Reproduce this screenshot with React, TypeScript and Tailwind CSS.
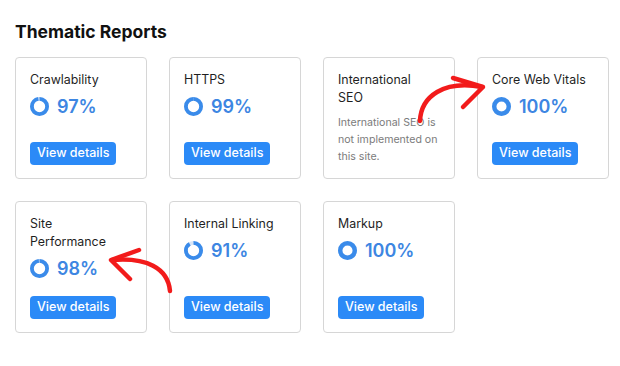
import React from 'react';

type Report = {
  title: string;
  percent?: number;
  note?: string;
};

const reports: Report[] = [
  { title: 'Crawlability', percent: 97 },
  { title: 'HTTPS', percent: 99 },
  { title: 'International SEO', note: 'International SEO is not implemented on this site.' },
  { title: 'Core Web Vitals', percent: 100 },
  { title: 'Site Performance', percent: 98 },
  { title: 'Internal Linking', percent: 91 },
  { title: 'Markup', percent: 100 },
];

const Donut: React.FC<{ value: number }> = ({ value }) => {
  const full = value >= 100;
  const stroke = full ? 4.4 : 3.8;
  const r = 9.5 - stroke / 2;
  const c = 2 * Math.PI * r;
  const filled = (c * value) / 100;
  return (
    <svg width="19" height="19" viewBox="0 0 19 19" className="shrink-0">
      <circle cx="9.5" cy="9.5" r={r} fill="none" stroke="#d9e6f7" strokeWidth={stroke} />
      <circle
        cx="9.5"
        cy="9.5"
        r={r}
        fill="none"
        stroke="#3a8bea"
        strokeWidth={stroke}
        strokeDasharray={`${filled} ${c}`}
        transform="rotate(-90 9.5 9.5)"
      />
    </svg>
  );
};

const ReportCard: React.FC<{ report: Report }> = ({ report }) => (
  <div className="flex flex-col rounded-[4px] border border-[#d6d6d6] bg-white px-[14px] pt-[13px] pb-[13px]">
    <div className="max-w-[95px] text-[12.4px] leading-[18px] text-[#1f1f1f]">{report.title}</div>
    {report.note ? (
      <p className="mt-[7px] mr-[-4px] text-[10.6px] leading-[17px] text-[#7b7b7b]">{report.note}</p>
    ) : (
      <>
        <div className="mt-[4px] flex h-[26px] items-center gap-[8px]">
          <Donut value={report.percent ?? 0} />
          <span className="text-[18px] font-semibold text-[#3d86e2]">{report.percent}%</span>
        </div>
        <div className="mt-auto pt-[12px]">
          <button className="h-[23px] rounded-[4px] bg-[#2b8af7] px-[7px] text-[12.5px] font-medium text-white">
            View details
          </button>
        </div>
      </>
    )}
  </div>
);

export default function App() {
  return (
    <div
      className="relative h-[366px] w-[620px] overflow-hidden bg-white pl-[15px] pt-[21px]"
      style={{ fontFamily: 'Inter, "Noto Sans", sans-serif' }}
    >
      <h2 className="text-[17.5px] font-bold leading-[22px] text-[#111]">Thematic Reports</h2>

      <div className="mt-[14px] grid grid-cols-[repeat(4,132px)] gap-[22px]">
        {reports.map((r) => (
          <ReportCard key={r.title} report={r} />
        ))}
      </div>

      {/* hand-drawn annotation arrows */}
      <svg
        className="pointer-events-none absolute left-0 top-0"
        width="620"
        height="366"
        viewBox="0 0 620 366"
      >
        <g fill="none" stroke="#f21b1b" strokeWidth="4.5" strokeLinecap="round" strokeLinejoin="round">
          <path d="M420 121 C 421 96, 444 80, 482 87" />
          <path d="M453 78 L 483 87 L 463 107" />
          <path d="M170 291 C 168 268, 146 257, 112 260" />
          <path d="M139 250 L 111 260 L 130 279" />
        </g>
      </svg>
    </div>
  );
}
